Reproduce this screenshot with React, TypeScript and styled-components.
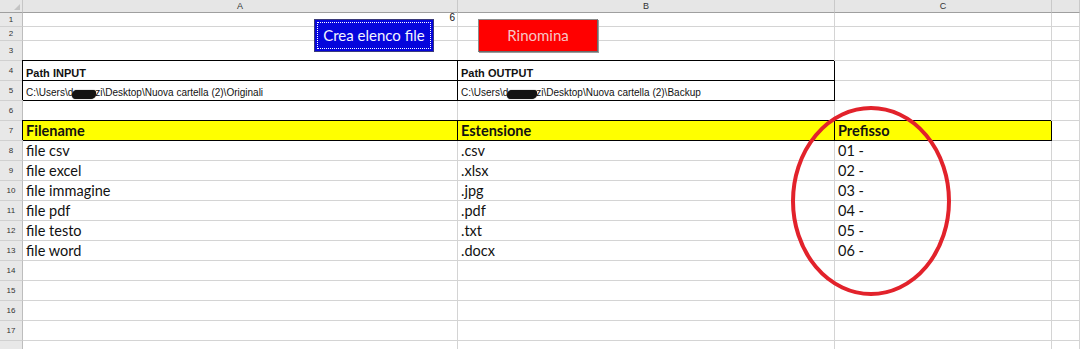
import React from 'react';
import styled, { createGlobalStyle, css } from 'styled-components';

type Font = 'small' | 'label' | 'path' | 'head' | 'body';

interface CellData {
  text: React.ReactNode;
  font: Font;
  right?: boolean;
}

interface RowData {
  n: number;
  h: number;
  label?: boolean;
  cells?: CellData[];
  boxed?: number;
  fill?: boolean;
}

const GlobalStyle = createGlobalStyle`
  html, body {
    margin: 0;
    padding: 0;
    background: #fff;
  }
  body {
    overflow: hidden;
  }
`;

const GRID = '#d4d4d4';

const Redact = styled.span<{ $w: number }>`
  display: inline-block;
  width: ${(p) => p.$w}px;
  height: 9px;
  margin: 0 -1px;
  background: #141414;
  border-radius: 5px 3px 5px 4px;
  vertical-align: -1px;
  box-shadow: 0 0 1px #222;
`;

const pathIn = (
  <>
    C:\Users\d<Redact $w={24} />zi\Desktop\Nuova cartella (2)\Originali
  </>
);

const pathOut = (
  <>
    C:\Users\d<Redact $w={30} />zi\Desktop\Nuova cartella (2)\Backup
  </>
);

const data: [string, string, string][] = [
  ['file csv', '.csv', '01 -'],
  ['file excel', '.xlsx', '02 -'],
  ['file immagine', '.jpg', '03 -'],
  ['file pdf', '.pdf', '04 -'],
  ['file testo', '.txt', '05 -'],
  ['file word', '.docx', '06 -'],
];

const rows: RowData[] = [
  { n: 1, h: 14, cells: [{ text: '6', font: 'small', right: true }] },
  { n: 2, h: 14 },
  { n: 3, h: 20 },
  {
    n: 4,
    h: 20,
    boxed: 2,
    cells: [
      { text: 'Path INPUT', font: 'label' },
      { text: 'Path OUTPUT', font: 'label' },
    ],
  },
  {
    n: 5,
    h: 20,
    boxed: 2,
    cells: [
      { text: pathIn, font: 'path' },
      { text: pathOut, font: 'path' },
    ],
  },
  { n: 6, h: 20 },
  {
    n: 7,
    h: 20,
    boxed: 3,
    fill: true,
    cells: [
      { text: 'Filename', font: 'head' },
      { text: 'Estensione', font: 'head' },
      { text: 'Prefisso', font: 'head' },
    ],
  },
  ...data.map((d, i) => ({
    n: 8 + i,
    h: 20,
    cells: d.map((t) => ({ text: t, font: 'body' as Font })),
  })),
  { n: 14, h: 20 },
  { n: 15, h: 20 },
  { n: 16, h: 20 },
  { n: 17, h: 20 },
  // only the top edge of row 18 is in view, its number is below the fold
  { n: 18, h: 20, label: false },
];

const fonts: Record<Font, ReturnType<typeof css>> = {
  small: css`
    font: 10px/12px 'Liberation Sans', Arial, sans-serif;
    padding-right: 2px;
    padding-bottom: 2px;
  `,
  label: css`
    font: bold 11px/13px 'Liberation Sans', Arial, sans-serif;
  `,
  path: css`
    font: 10px/12px 'Liberation Sans', Arial, sans-serif;
    padding-bottom: 1px;
  `,
  head: css`
    font: bold 14.5px/16px Lato, 'Open Sans', sans-serif;
    padding-bottom: 1px;
  `,
  body: css`
    font: 14.5px/16px Lato, 'Open Sans', sans-serif;
    padding-bottom: 1px;
  `,
};

const Sheet = styled.div<{ $rows: string }>`
  position: relative;
  display: grid;
  grid-template-columns: 23px 435px 377px 217px 1fr;
  grid-template-rows: 13px ${(p) => p.$rows};
  width: 1080px;
  height: 349px;
  overflow: hidden;
  background: #fff;
`;

const Corner = styled.div`
  position: relative;
  background: #e6e6e6;
  border-right: 1px solid #c6c6c6;
  border-bottom: 1px solid #9f9f9f;
  box-sizing: border-box;

  &::after {
    content: '';
    position: absolute;
    right: 2px;
    bottom: 2px;
    border-left: 6px solid transparent;
    border-bottom: 6px solid #c4c4c4;
  }
`;

const ColHead = styled.div`
  display: flex;
  align-items: center;
  justify-content: center;
  background: #e6e6e6;
  border-right: 1px solid #c9c9c9;
  border-bottom: 1px solid #9f9f9f;
  box-sizing: border-box;
  font: 9px/11px 'Liberation Sans', Arial, sans-serif;
  color: #333;
`;

const RowHead = styled.div`
  display: flex;
  align-items: center;
  justify-content: center;
  background: #e8e8e8;
  border-right: 1px solid #bdbdbd;
  border-bottom: 1px solid #d0d0d0;
  box-sizing: border-box;
  font: 8px/10px 'Liberation Sans', Arial, sans-serif;
  color: #333;
`;

const Cell = styled.div<{ $font?: Font; $right?: boolean; $boxed?: boolean; $fill?: boolean }>`
  display: flex;
  align-items: flex-end;
  justify-content: ${(p) => (p.$right ? 'flex-end' : 'flex-start')};
  padding-left: 3px;
  border-right: 1px solid ${GRID};
  border-bottom: 1px solid ${GRID};
  box-sizing: border-box;
  white-space: nowrap;
  overflow: visible;
  color: #111;
  background: ${(p) => (p.$fill ? '#ffff00' : 'transparent')};
  ${(p) => p.$font && fonts[p.$font]}

  ${(p) =>
    p.$boxed &&
    css`
      position: relative;
      z-index: 1;
      border-right-color: #000;
      border-bottom-color: #000;
      box-shadow: -1px -1px 0 #000;
    `}
`;

const SheetButton = styled.button<{ $x: number; $tone: 'blue' | 'red' }>`
  position: absolute;
  top: 19px;
  left: ${(p) => p.$x}px;
  z-index: 2;
  width: 120px;
  height: 33px;
  padding: 0 0 1px;
  font: 15px/17px Lato, 'Open Sans', sans-serif;
  cursor: pointer;
  ${(p) =>
    p.$tone === 'blue'
      ? css`
          background: #0505dc;
          color: #f4f4ff;
          border: 1px solid #3a3a7a;
          outline: 1px dotted #ffffff;
          outline-offset: -4px;
        `
      : css`
          background: #ff0000;
          color: #f6c6c6;
          border: 1px solid #8c8c8c;
          border-right-color: #6a6a6a;
          border-bottom-color: #6a6a6a;
          box-shadow: 1px 1px 0 #9a9a9a;
        `}
`;

const Marker = styled.svg`
  position: absolute;
  left: 789px;
  top: 104px;
  z-index: 3;
  pointer-events: none;
`;

const App = () => {
  const rowTemplate = rows.map((r) => `${r.h}px`).join(' ');

  return (
    <>
      <GlobalStyle />
      <Sheet $rows={rowTemplate}>
        <Corner />
        {['A', 'B', 'C', ''].map((c, i) => (
          <ColHead key={i}>{c}</ColHead>
        ))}
        {rows.map((r) => (
          <React.Fragment key={r.n}>
            <RowHead>{r.label === false ? null : r.n}</RowHead>
            {[0, 1, 2, 3].map((col) => {
              const cell = r.cells?.[col];
              const boxed = r.boxed !== undefined && col < r.boxed;
              return (
                <Cell
                  key={col}
                  $font={cell?.font}
                  $right={cell?.right}
                  $boxed={boxed}
                  $fill={r.fill && boxed}
                >
                  {cell?.text}
                </Cell>
              );
            })}
          </React.Fragment>
        ))}

        <SheetButton $x={314} $tone="blue">
          Crea elenco file
        </SheetButton>
        <SheetButton $x={478} $tone="red">
          Rinomina
        </SheetButton>

        <Marker width="164" height="194" viewBox="0 0 164 194">
          <ellipse cx="82" cy="97" rx="78" ry="93" fill="none" stroke="#e2222b" strokeWidth="4" />
        </Marker>
      </Sheet>
    </>
  );
};

export default App;
